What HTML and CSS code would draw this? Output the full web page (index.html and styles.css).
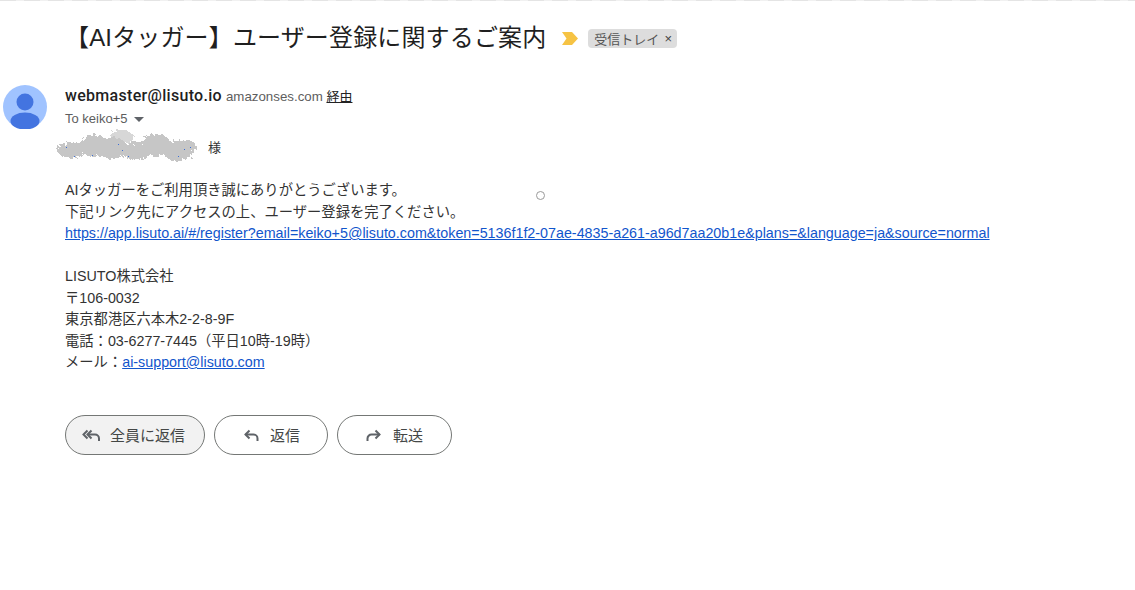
FILE: index.html
```html
<!DOCTYPE html>
<html lang="ja">
<head>
    <meta charset="UTF-8">
    <title>【AIタッガー】ユーザー登録に関するご案内</title>
    <link rel="stylesheet" href="styles.css">
</head>
<body>
    <div class="top-line"></div>
    <div class="subject-row">
        <h1>【AIタッガー】ユーザー登録に関するご案内</h1>
        <svg class="marker" width="16" height="13" viewBox="0 0 16 13"><path d="M0 0h10l6 6.500-6 6.500H0l4.500-6.500z" fill="#f6c344"/></svg>
        <span class="label">受信トレイ<span class="label-x">×</span></span>
    </div>
    <div class="message">
        <div class="avatar">
            <svg width="44" height="44" viewBox="0 0 44 44">
                <circle cx="22" cy="22" r="22" fill="#a0c3ff"/>
                <circle cx="22" cy="17" r="8.500" fill="#4374e0"/>
                <ellipse cx="22" cy="36" rx="14.500" ry="8.500" fill="#4374e0"/>
            </svg>
        </div>
        <div class="content">
            <div class="sender"><b>webmaster@lisuto.io</b> <span class="via">amazonses.com <u>経由</u></span></div>
            <div class="to">To keiko+5 <span class="caret"></span></div>
            <div class="greeting">
                <svg class="smudge" width="146" height="38" viewBox="0 0 146 38">
                    <defs>
                        <filter id="rough" x="-5%" y="-20%" width="110%" height="140%">
                            <feTurbulence type="fractalNoise" baseFrequency="0.35" numOctaves="2" seed="4"/>
                            <feDisplacementMap in="SourceGraphic" scale="7"/>
                        </filter>
                    </defs>
                    <g fill="#c6c6c6" filter="url(#rough)" shape-rendering="crispEdges">
                        <ellipse cx="16" cy="23" rx="15" ry="8"/>
                        <ellipse cx="38" cy="19" rx="14" ry="11"/>
                        <ellipse cx="56" cy="21" rx="15" ry="11"/>
                        <ellipse cx="66" cy="10" rx="12" ry="7" opacity="0.7"/>
                        <ellipse cx="80" cy="24" rx="14" ry="9"/>
                        <ellipse cx="100" cy="18" rx="15" ry="11"/>
                        <ellipse cx="122" cy="24" rx="15" ry="10"/>
                        <ellipse cx="132" cy="20" rx="8" ry="7"/>
                    </g>
                    <g fill="#3b6fd8">
                        <rect x="10" y="20" width="1" height="1"/>
                        <rect x="18" y="29" width="1" height="1"/>
                        <rect x="36" y="28" width="1" height="1"/>
                        <rect x="62" y="17" width="1" height="1"/>
                        <rect x="66" y="23" width="1" height="1"/>
                        <rect x="72" y="29" width="1" height="1"/>
                        <rect x="122" y="29" width="1" height="1"/>
                        <rect x="128" y="22" width="1" height="1"/>
                        <rect x="134" y="20" width="1" height="1"/>
                    </g>
                </svg>
                <span>様</span>
            </div>
            <div class="body-text">
                AIタッガーをご利用頂き誠にありがとうございます。<br>
                下記リンク先にアクセスの上、ユーザー登録を完了ください。<br>
                <a href="#">https://app.lisuto.ai/#/register?email=keiko+5@lisuto.com&amp;token=5136f1f2-07ae-4835-a261-a96d7aa20b1e&amp;plans=&amp;language=ja&amp;source=normal</a><br>
                <br>
                LISUTO株式会社<br>
                〒106-0032<br>
                東京都港区六本木2-2-8-9F<br>
                電話：03-6277-7445（平日10時-19時）<br>
                メール：<a href="#">ai-support@lisuto.com</a>
            </div>
            <div class="actions">
                <button class="btn btn-active">
                    <svg width="20" height="20" viewBox="0 0 20 20" fill="none" stroke="#5f6368" stroke-width="2"><path d="M18 16v-2.500a4 4 0 0 0-4-4H7"/><path d="M10.500 5.500 6.500 9.500l4 4"/><path d="M6.500 5.500 2.500 9.500l4 4"/></svg>
                    全員に返信
                </button>
                <button class="btn">
                    <svg width="20" height="20" viewBox="0 0 20 20" fill="none" stroke="#5f6368" stroke-width="2"><path d="M16.500 16v-2.500a4 4 0 0 0-4-4H4.500"/><path d="M8.500 5.500 4.500 9.500l4 4"/></svg>
                    返信
                </button>
                <button class="btn btn-forward">
                    <svg width="20" height="20" viewBox="0 0 20 20" fill="none" stroke="#5f6368" stroke-width="2"><path d="M3.500 16v-2.500a4 4 0 0 1 4-4h8"/><path d="M11.500 5.500l4 4-4 4"/></svg>
                    転送
                </button>
            </div>
        </div>
    </div>
    <div class="cursor-ring"></div>
</body>
</html>
```

FILE: styles.css
```css
html, body { height: 100%; overflow: hidden; }
body { margin: 0; background-color: #fff; color: #333; font-family: "Liberation Sans", "Noto Sans CJK JP", sans-serif; font-size: 14.300px; }
.top-line { height: 1px; background: repeating-linear-gradient(90deg, #e4e4e4 0 16px, #f1f1f1 16px 24px); }
.subject-row { display: flex; align-items: center; height: 74px; padding-left: 65px; }
h1 { margin: 0 16px 0 0; font-size: 24px; font-weight: 400; letter-spacing: 0.150px; color: #1f1f1f; line-height: 74px; white-space: nowrap; }
.marker { margin-right: 10px; }
.label { display: inline-flex; align-items: center; height: 19px; padding: 0 5px 0 6px; background-color: #dddddd; border-radius: 4px; font-size: 13px; color: #555; }
.label-x { margin-left: 5px; font-size: 13px; color: #444; }
.message { display: flex; padding: 10px 0 0 3px; }
.avatar { width: 44px; height: 44px; margin-right: 18px; flex-shrink: 0; }
.avatar svg { display: block; }
.sender { line-height: 20px; margin-top: 1px; white-space: nowrap; }
.sender b { color: #1f1f1f; font-family: Roboto, "Liberation Sans", sans-serif; font-weight: 500; font-size: 16px; letter-spacing: 0.300px; }
.via { font-size: 13.300px; color: #5e5e5e; }
.via u { color: #222; font-size: 13px; }
.to { display: flex; align-items: center; font-size: 13px; line-height: 20px; margin-top: 2px; color: #5e5e5e; }
.caret { width: 0; height: 0; margin-left: 6px; border-left: 5px solid transparent; border-right: 5px solid transparent; border-top: 5px solid #5f6368; }
.greeting { display: flex; align-items: center; height: 20px; margin-top: 7px; margin-left: -9px; font-size: 13px; color: #333; }
.smudge { margin: -9px 6px -9px 0; flex-shrink: 0; }
.body-text { margin-top: 24px; line-height: 21.500px; white-space: nowrap; }
.body-text a { color: #1155cc; }
.actions { display: flex; gap: 9px; margin-top: 41px; }
.btn { display: flex; align-items: center; justify-content: center; gap: 9px; height: 40px; padding: 0 27px 0 26px; background-color: #fff; border: 1px solid #747775; border-radius: 20px; font-family: inherit; font-size: 15px; color: #444746; }
.btn-active { padding: 0 19px 0 15px; background-color: #f2f2f2; }
.btn-forward { padding-right: 28px; }
.cursor-ring { position: absolute; left: 536px; top: 191px; width: 7px; height: 7px; border: 1px solid #9a9a9a; border-radius: 50%; }
```
